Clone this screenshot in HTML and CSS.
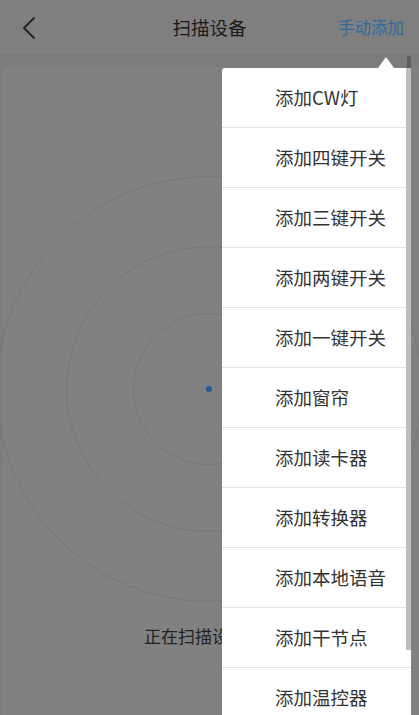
FILE: index.html
```html
<!DOCTYPE html>
<html lang="zh">
<head>
<meta charset="utf-8">
<title>扫描设备</title>
<link rel="stylesheet" href="styles.css">
</head>
<body>
<div class="screen">
  <header class="topbar">
    <div class="back">
      <svg width="14" height="24" viewBox="0 0 14 24"><path d="M12 2 L2 12 L12 22" fill="none" stroke="#222" stroke-width="1.8" stroke-linecap="round" stroke-linejoin="round"/></svg>
    </div>
    <div class="title">扫描设备</div>
    <div class="action">手动添加</div>
  </header>
  <main class="content">
    <div class="card">
      <div class="radar">
        <div class="ring r1">
          <div class="ring r2">
            <div class="ring r3">
              <div class="dot"></div>
            </div>
          </div>
        </div>
      </div>
      <div class="status">正在扫描设备...</div>
    </div>
  </main>

  <div class="menu">
    <div class="arrow"></div>
    <div class="item">添加CW灯</div>
    <div class="item">添加四键开关</div>
    <div class="item">添加三键开关</div>
    <div class="item">添加两键开关</div>
    <div class="item">添加一键开关</div>
    <div class="item">添加窗帘</div>
    <div class="item">添加读卡器</div>
    <div class="item">添加转换器</div>
    <div class="item">添加本地语音</div>
    <div class="item">添加干节点</div>
    <div class="item">添加温控器</div>
  </div>
  <div class="scroll-top"></div>
  <div class="scroll-thumb"></div>
</div>
</body>
</html>
```
FILE: styles.css
```css
* { box-sizing: border-box; }
html, body {
  margin: 0;
  padding: 0;
  width: 419px;
  height: 715px;
  overflow: hidden;
  background: #7c7c7c;
  font-family: "Noto Sans CJK SC", "Noto Sans", sans-serif;
}
.screen {
  position: relative;
  width: 419px;
  height: 715px;
  overflow: hidden;
}
.topbar {
  height: 55px;
  background: #7f7f7f;
  border-bottom: 1px solid #777;
  display: flex;
  align-items: center;
}
.back {
  width: 110px;
  padding-left: 22px;
  display: flex;
  align-items: center;
  margin-top: 2px;
}
.title {
  flex: 1;
  text-align: center;
  font-size: 18.5px;
  color: #1a1a1a;
}
.action {
  width: 110px;
  padding-right: 15px;
  text-align: right;
  font-size: 16.5px;
  color: #306c9e;
}
.content {
  padding: 12px 0 0 3px;
  height: 660px;
}
.card {
  background: #818181;
  height: 100%;
  display: flex;
  flex-direction: column;
  align-items: center;
}
.radar {
  margin-top: 109px;
  width: 426px;
  height: 426px;
  margin-left: -4px;
  flex-shrink: 0;
}
.ring {
  border-radius: 50%;
  border: 1px solid #777;
  display: flex;
  align-items: center;
  justify-content: center;
  flex-shrink: 0;
}
.r1 { width: 426px; height: 426px; }
.r2 { width: 286px; height: 286px; }
.r3 { width: 152px; height: 152px; }
.dot {
  width: 6px;
  height: 6px;
  border-radius: 50%;
  background: #1f5c94;
}
.status {
  margin-top: 24px;
  font-size: 17px;
  line-height: 20px;
  color: #222;
  margin-left: -18px;
}
.menu {
  position: absolute;
  left: 222px;
  top: 68px;
  width: 189px;
  background: #fff;
  border-radius: 3px 0 0 0;
}
.arrow {
  position: absolute;
  top: -11px;
  left: 156px;
  width: 0;
  height: 0;
  border-left: 8px solid transparent;
  border-right: 8px solid transparent;
  border-bottom: 11px solid #fff;
}
.item {
  height: 60px;
  border-bottom: 1px solid #e3e3e3;
  display: flex;
  align-items: center;
  padding-left: 53px;
  font-size: 18.5px;
  color: #333;
  padding-bottom: 1px;
}
.scroll-top {
  position: absolute;
  left: 407px;
  top: 56px;
  width: 4px;
  height: 12px;
  background: #5e5e5e;
}
.scroll-thumb {
  position: absolute;
  left: 406px;
  top: 68px;
  width: 5px;
  height: 582px;
  background: #bdbdbd;
}
```
